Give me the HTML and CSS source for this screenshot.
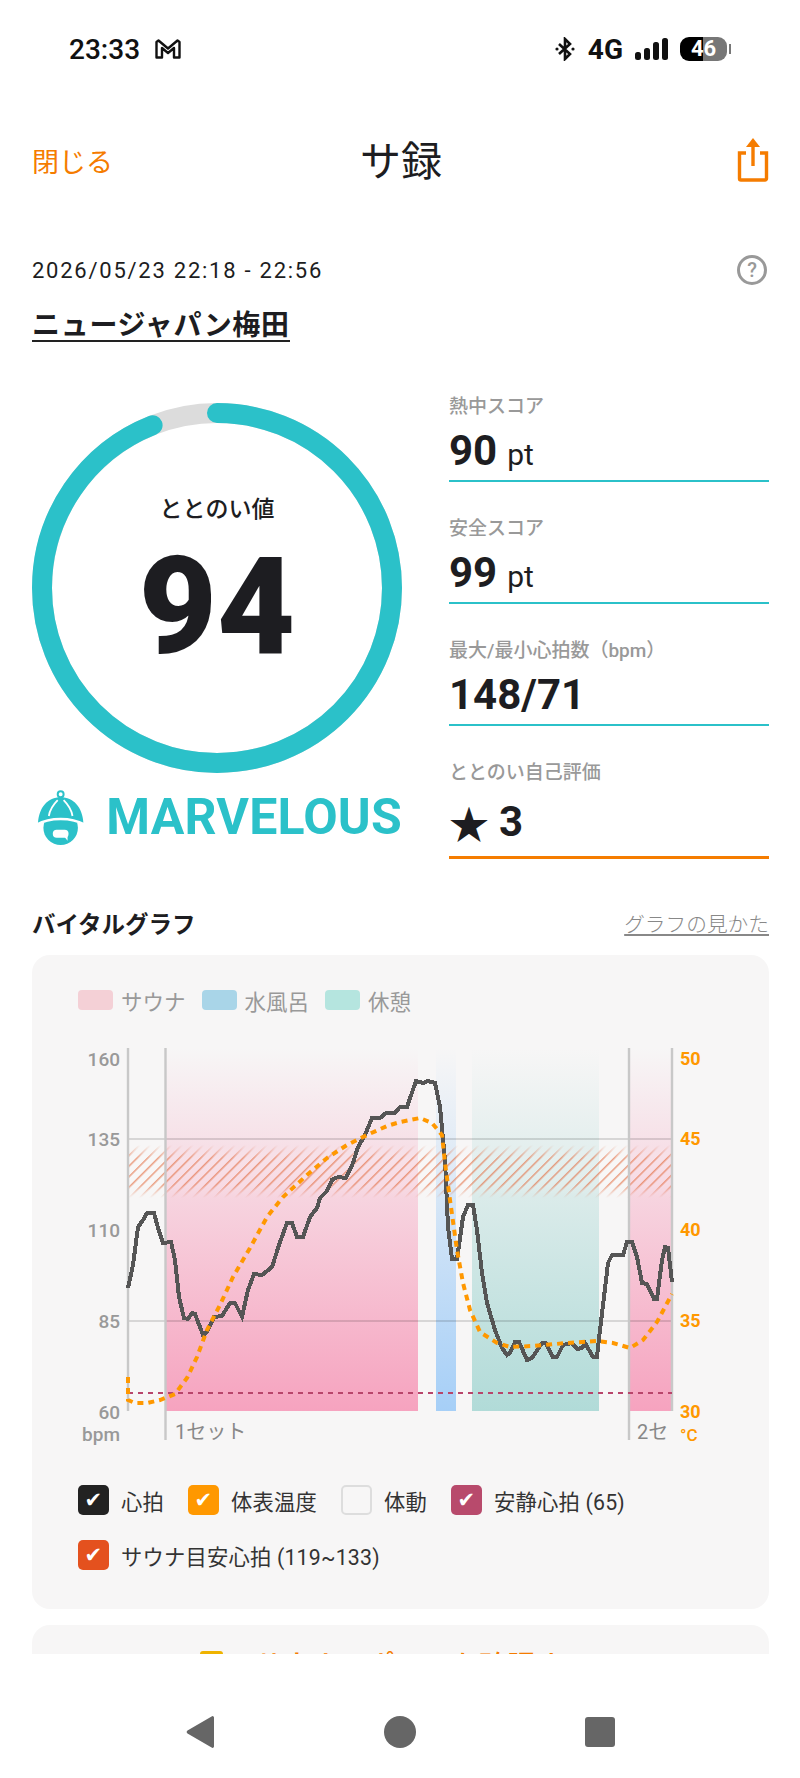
FILE: index.html
```html
<!DOCTYPE html>
<html lang="ja">
  <head>
    <meta charset="utf-8">
    <title>サ録</title>
    <link rel="stylesheet" href="styles.css">
  </head>
  <body>
    <div class="content">
      <div class="status">
        <div class="status-left">
          <span class="time">23:33</span>
          <svg class="gmail" width="26" height="20" viewBox="0 0 26 20">
            <path d="M1.5 18.5V3L3.5 1.5L13 9.5L22.5 1.5L24.5 3V18.5H19V9L13 14L7 9V18.5Z" fill="none" stroke="#111" stroke-width="2.4" stroke-linejoin="round"/>
          </svg>
        </div>
        <div class="status-right">
          <svg width="20" height="24" viewBox="0 0 20 24">
            <path d="M4 7L15 17L10 22V2L15 7L4 17" fill="none" stroke="#111" stroke-width="2.6"/>
            <circle cx="2" cy="12" r="1.6" fill="#111"/>
            <circle cx="18" cy="12" r="1.6" fill="#111"/>
          </svg>
          <span class="net">4G</span>
          <svg class="signal" width="33" height="22" viewBox="0 0 33 22">
            <rect x="0" y="14" width="6" height="8" rx="2.5" fill="#111"/>
            <rect x="9" y="10" width="6" height="12" rx="2.5" fill="#111"/>
            <rect x="18" y="4" width="6" height="18" rx="2.5" fill="#111"/>
            <rect x="27" y="0" width="6" height="22" rx="2.5" fill="#111"/>
          </svg>
          <div class="battery"><span>46</span></div>
          <div class="battery-tip"></div>
        </div>
      </div>

      <header class="top">
        <span class="close">閉じる</span>
        <h1 class="title">サ録</h1>
        <svg class="share" width="32" height="44" viewBox="0 0 32 44">
          <path d="M9 15H2.5V40.5A1.5 1.5 0 0 0 4 42H28A1.5 1.5 0 0 0 29.5 40.5V15H23" fill="none" stroke="#f57c00" stroke-width="3.4"/>
          <path d="M16 28V4" fill="none" stroke="#f57c00" stroke-width="3.4"/>
          <path d="M16 0L23 9H9Z" fill="#f57c00"/>
        </svg>
      </header>

      <div class="date-row">
        <span class="date">2026/05/23 22:18 - 22:56</span>
        <span class="help">?</span>
      </div>
      <div class="venue">ニュージャパン梅田</div>

      <section class="scores">
        <div class="score-left">
          <div class="ring">
            <svg width="370" height="370" viewBox="0 0 370 370">
              <circle cx="185" cy="185" r="175" fill="none" stroke="#dcdcdc" stroke-width="20"/>
              <circle cx="185" cy="185" r="175" fill="none" stroke="#2bc1c9" stroke-width="20" stroke-linecap="round" pathLength="100" stroke-dasharray="94 6" transform="rotate(-90 185 185)"/>
            </svg>
            <div class="ring-text">
              <div class="ring-label">ととのい値</div>
              <div class="ring-value">94</div>
            </div>
          </div>
          <div class="rank">
            <svg width="50" height="57" viewBox="0 0 50 57">
              <circle cx="25" cy="5" r="3" fill="none" stroke="#2bc1c9" stroke-width="2"/>
              <path d="M2 34C3 18 12 8 25 8C38 8 47 18 48 34Z" fill="#2bc1c9"/>
              <circle cx="25" cy="39" r="17.5" fill="#2bc1c9"/>
              <path d="M13 27C14 21 18 15 22 11M37 27C36 21 32 15 28 11" fill="none" stroke="#fff" stroke-width="1.8"/>
              <path d="M0 36C14 28 36 28 50 36" fill="none" stroke="#fff" stroke-width="2.4"/>
              <rect x="17" y="41" width="16" height="8" rx="4" fill="#fff"/>
              <path d="M28 47L32 52L32 45Z" fill="#fff"/>
            </svg>
            <span class="rank-name">MARVELOUS</span>
          </div>
        </div>

        <div class="stats">
          <div class="stat">
            <div class="stat-label">熱中スコア</div>
            <div class="stat-value">90<span class="unit">pt</span></div>
          </div>
          <div class="stat">
            <div class="stat-label">安全スコア</div>
            <div class="stat-value">99<span class="unit">pt</span></div>
          </div>
          <div class="stat">
            <div class="stat-label">最大/最小心拍数（bpm）</div>
            <div class="stat-value">148/71</div>
          </div>
          <div class="stat stat-self">
            <div class="stat-label">ととのい自己評価</div>
            <div class="stat-value"><span class="star">★</span>3</div>
          </div>
        </div>
      </section>

      <div class="section-head">
        <h2 class="section-title">バイタルグラフ</h2>
        <span class="section-link">グラフの見かた</span>
      </div>

      <section class="card graph-card">
        <div class="legend">
          <span class="swatch sw-sauna"></span><span class="legend-text">サウナ</span>
          <span class="swatch sw-water"></span><span class="legend-text">水風呂</span>
          <span class="swatch sw-rest"></span><span class="legend-text">休憩</span>
        </div>

        <svg class="chart" width="737" height="420" viewBox="32 1030 737 420">
          <defs>
            <linearGradient id="gSauna" x1="0" y1="0" x2="0" y2="1">
              <stop offset="0" stop-color="#f6a3bf" stop-opacity="0"/>
              <stop offset="1" stop-color="#f6a3bf"/>
            </linearGradient>
            <linearGradient id="gWater" x1="0" y1="0" x2="0" y2="1">
              <stop offset="0" stop-color="#a6cff7" stop-opacity="0"/>
              <stop offset="1" stop-color="#a6cff7"/>
            </linearGradient>
            <linearGradient id="gRest" x1="0" y1="0" x2="0" y2="1">
              <stop offset="0" stop-color="#b1dbd8" stop-opacity="0"/>
              <stop offset="1" stop-color="#b1dbd8"/>
            </linearGradient>
            <pattern id="hatch" width="7.5" height="7.5" patternUnits="userSpaceOnUse" patternTransform="rotate(45)">
              <rect x="0" y="0" width="1.5" height="7.5" fill="#e2693c" fill-opacity=".62"/>
            </pattern>
            <linearGradient id="gFade" x1="0" y1="0" x2="0" y2="1">
              <stop offset="0" stop-color="#fff" stop-opacity="0"/>
              <stop offset=".25" stop-color="#fff"/>
              <stop offset=".75" stop-color="#fff"/>
              <stop offset="1" stop-color="#fff" stop-opacity="0"/>
            </linearGradient>
            <mask id="fadeMask" maskUnits="userSpaceOnUse" x="128" y="1145" width="544" height="53">
              <rect x="128" y="1145" width="544" height="53" fill="url(#gFade)"/>
            </mask>
          </defs>

          <rect x="166" y="1048" width="252" height="363" fill="url(#gSauna)"/>
          <rect x="436" y="1048" width="20" height="363" fill="url(#gWater)"/>
          <rect x="472" y="1048" width="127" height="363" fill="url(#gRest)"/>
          <rect x="630" y="1048" width="42" height="363" fill="url(#gSauna)"/>

          <line class="grid" x1="128" y1="1139" x2="672" y2="1139"/>
          <line class="grid" x1="128" y1="1321" x2="672" y2="1321"/>

          <g mask="url(#fadeMask)">
            <rect x="128" y="1145" width="544" height="53" fill="#fff" fill-opacity=".12"/>
            <rect x="128" y="1145" width="544" height="53" fill="url(#hatch)"/>
          </g>

          <line class="axis" x1="128" y1="1048" x2="128" y2="1411"/>
          <line class="axis" x1="165.5" y1="1048" x2="165.5" y2="1440"/>
          <line class="axis" x1="629" y1="1048" x2="629" y2="1440"/>
          <line class="axis" x1="672" y1="1048" x2="672" y2="1411"/>

          <line x1="128" y1="1393" x2="672" y2="1393" stroke="#b8456b" stroke-width="2" stroke-dasharray="5 5"/>

          <polyline class="hr" points="128,1288 133,1265 138,1227 143,1220 147,1213 154,1213 158,1228 163,1243 171,1242 175,1260 179,1297 184,1318 188,1319 192,1313 195,1314 203,1335 207,1332 214,1317 222,1316 230,1303 235,1303 242,1317 248,1290 254,1274 262,1275 272,1267 280,1242 287,1223 292,1223 297,1237 303,1237 310,1217 317,1208 320,1198 327,1191 332,1180 338,1177 346,1178 353,1163 358,1147 365,1135 372,1118 380,1118 386,1113 395,1113 400,1107 407,1107 416,1081 423,1083 428,1081 435,1083 440,1107 445,1160 448,1227 452,1259 457,1259 463,1217 468,1205 473,1205 477,1230 482,1273 487,1303 495,1330 502,1348 507,1355 510,1353 515,1342 519,1342 527,1360 532,1358 542,1343 546,1343 553,1357 557,1357 563,1345 572,1343 577,1349 582,1348 585,1343 593,1357 597,1357 600,1330 604,1297 608,1263 612,1255 623,1255 627,1242 632,1242 637,1257 642,1283 647,1284 654,1299 657,1299 662,1260 665,1247 668,1248 672,1282"/>
          <polyline class="temp" points="128,1377 128,1400 135,1403 147,1403 160,1400 175,1394 187,1378 197,1357 207,1330 220,1305 233,1277 250,1248 267,1217 283,1197 307,1175 327,1158 347,1145 367,1135 387,1126 400,1122 420,1118 432,1123 442,1135 445,1163 450,1200 457,1250 463,1283 470,1310 480,1332 497,1343 510,1347 533,1346 567,1343 597,1341 613,1343 630,1348 643,1340 657,1322 672,1294"/>

          <text class="tick" x="120" y="1066" text-anchor="end">160</text>
          <text class="tick" x="120" y="1146" text-anchor="end">135</text>
          <text class="tick" x="120" y="1237" text-anchor="end">110</text>
          <text class="tick" x="120" y="1328" text-anchor="end">85</text>
          <text class="tick" x="120" y="1419" text-anchor="end">60</text>
          <text class="tick" x="120" y="1441" text-anchor="end">bpm</text>

          <text class="tick-r" x="680" y="1065">50</text>
          <text class="tick-r" x="680" y="1145">45</text>
          <text class="tick-r" x="680" y="1236">40</text>
          <text class="tick-r" x="680" y="1327">35</text>
          <text class="tick-r" x="680" y="1418">30</text>
          <text class="tick-c" x="680" y="1441">°C</text>

          <text class="set" x="175" y="1439">1セット</text>
          <text class="set" x="637" y="1439">2セ</text>
        </svg>

        <div class="checks">
          <label class="check"><span class="box box-hr">✔</span>心拍</label>
          <label class="check"><span class="box box-temp">✔</span>体表温度</label>
          <label class="check"><span class="box box-move"></span>体動</label>
          <label class="check"><span class="box box-rest">✔</span>安静心拍 (65)</label>
          <label class="check"><span class="box box-target">✔</span>サウナ目安心拍 (119~133)</label>
        </div>
      </section>

      <section class="card next-card">
        <span class="next-icon"></span>
        <span class="next-text">サウナレポートを確認する</span>
      </section>
    </div>

    <nav class="nav">
      <svg width="29" height="34" viewBox="0 0 29 34">
        <path d="M28 2.5V31.5A1.5 1.5 0 0 1 25.6 32.6L1.5 18.5A2 2 0 0 1 1.5 15.5L25.6 1.4A1.5 1.5 0 0 1 28 2.5Z" fill="#666"/>
      </svg>
      <svg width="32" height="32" viewBox="0 0 32 32"><circle cx="16" cy="16" r="16" fill="#666"/></svg>
      <svg width="30" height="30" viewBox="0 0 30 30"><rect width="30" height="30" rx="3" fill="#666"/></svg>
    </nav>
  </body>
</html>
```

FILE: styles.css
```css
* {
  box-sizing: border-box;
}
body {
  margin: 0;
  width: 800px;
  height: 1778px;
  display: flex;
  flex-direction: column;
  background: #fff;
  color: #1d1d21;
  font-family: Roboto, "Noto Sans CJK JP", sans-serif;
  overflow: hidden;
}
.content {
  height: 1654px;
  overflow: hidden;
  padding: 0 31px 0 32px;
}

/* status bar */
.status {
  height: 98px;
  margin: 0 -31px 0 -32px;
  padding: 0 69px;
  display: flex;
  justify-content: space-between;
  align-items: center;
  color: #111;
}
.status-left,
.status-right {
  display: flex;
  align-items: center;
}
.time {
  font-size: 28px;
  font-weight: 500;
}
.gmail {
  margin-left: 15px;
}
.net {
  margin-left: 13px;
  font-size: 28px;
  font-weight: 700;
}
.signal {
  margin-left: 12px;
}
.battery {
  width: 47px;
  height: 24px;
  margin-left: 12px;
  border-radius: 9px;
  background: linear-gradient(90deg, #000 49%, #777 49%);
  color: #fff;
  font-size: 22px;
  font-weight: 700;
  line-height: 24px;
  text-align: center;
}
.battery-tip {
  width: 2px;
  height: 10px;
  margin-left: 2px;
  background: #777;
}

/* title row */
.top {
  height: 128px;
  display: flex;
  justify-content: space-between;
  align-items: center;
  position: relative;
}
.close {
  margin-top: -3px;
  font-size: 27px;
  color: #f57c00;
}
.title {
  position: absolute;
  left: 328px;
  top: 36px;
  margin: 0;
  font-size: 41px;
  font-weight: 400;
  line-height: 56px;
}
.share {
  margin-top: -4px;
}

.date-row {
  height: 44px;
  margin-top: 22px;
  display: flex;
  justify-content: space-between;
  align-items: center;
}
.date {
  font-size: 22px;
  letter-spacing: 1.75px;
}
.help {
  width: 30px;
  height: 30px;
  margin-right: 2px;
  border: 3px solid #999;
  border-radius: 50%;
  color: #999;
  font-size: 20px;
  font-weight: 500;
  line-height: 24px;
  text-align: center;
}
.venue {
  display: inline-block;
  margin-top: 20px;
  font-size: 28px;
  font-weight: 700;
  letter-spacing: 0.7px;
  line-height: 28px;
  border-bottom: 2px solid #222;
}

/* ring + stats */
.scores {
  display: flex;
  margin-top: 50px;
}
.score-left {
  width: 370px;
  padding-top: 11px;
}
.ring {
  position: relative;
  width: 370px;
  height: 370px;
}
.ring svg {
  display: block;
}
.ring-text {
  position: absolute;
  left: 0;
  right: 0;
  top: 90px;
  text-align: center;
}
.ring-label {
  font-size: 23px;
  font-weight: 500;
  line-height: 34px;
}
.ring-value {
  margin-top: 16px;
  font-size: 135px;
  font-weight: 900;
  line-height: 128px;
}
.rank {
  display: flex;
  align-items: center;
  margin-top: 16px;
  padding-left: 4px;
}
.rank-name {
  margin-left: 21px;
  font-size: 50px;
  font-weight: 700;
  letter-spacing: .2px;
  line-height: 57px;
  color: #2bc1c9;
}
.stats {
  width: 320px;
  margin-left: 47px;
}
.stat {
  height: 90px;
  margin-bottom: 32px;
  border-bottom: 2px solid #2bc1c9;
}
.stat-label {
  font-size: 19px;
  font-weight: 500;
  line-height: 30px;
  color: #999;
}
.stat-value {
  font-size: 42px;
  font-weight: 700;
  line-height: 58px;
}
.unit {
  margin-left: 10px;
  font-size: 30px;
  font-weight: 400;
}
.stat-self {
  height: 101px;
  margin-bottom: 0;
  border-bottom: 3px solid #f57c00;
}
.stat-self .stat-value {
  display: flex;
  align-items: center;
  height: 68px;
}
.star {
  margin-right: 10px;
  font-family: "Noto Sans CJK JP", sans-serif;
  font-size: 40px;
  font-weight: 400;
}

/* graph */
.section-head {
  height: 40px;
  margin-top: 44px;
  display: flex;
  justify-content: space-between;
  align-items: center;
}
.section-title {
  margin: 0;
  font-size: 23.5px;
  font-weight: 700;
}
.section-link {
  font-size: 20.7px;
  font-weight: 300;
  color: #888;
  text-decoration: underline;
}
.card {
  background: #f7f6f6;
  border-radius: 18px;
}
.graph-card {
  height: 654px;
  margin-top: 12px;
  padding-top: 35px;
}
.legend {
  display: flex;
  align-items: center;
  height: 20px;
  padding-left: 46px;
}
.swatch {
  width: 35px;
  height: 20px;
  margin-right: 8px;
  border-radius: 4px;
}
.sw-sauna {
  background: #f4d0d6;
}
.sw-water {
  background: #a9d5e8;
}
.sw-rest {
  background: #b5e5df;
}
.legend-text {
  margin-right: 16px;
  font-size: 21.5px;
  color: #999;
}
.chart {
  display: block;
  margin-top: 20px;
}
.grid {
  stroke: #000;
  stroke-opacity: .13;
  stroke-width: 2;
}
.axis {
  stroke: #c8c8c8;
  stroke-width: 2.4;
}
.hr {
  fill: none;
  stroke: #555;
  stroke-width: 4;
  shape-rendering: crispEdges;
}
.temp {
  fill: none;
  stroke: #ff9800;
  stroke-width: 4;
  stroke-dasharray: 6 5;
}
.tick {
  font-size: 19px;
  font-weight: 500;
  fill: #999;
}
.tick-r {
  font-size: 18px;
  font-weight: 700;
  fill: #ff9800;
}
.tick-c {
  font-size: 17px;
  font-weight: 500;
  fill: #ff9800;
}
.set {
  font-size: 20px;
  fill: #888;
}
.checks {
  display: flex;
  flex-wrap: wrap;
  gap: 25px 24px;
  padding: 35px 46px 0;
}
.check {
  display: flex;
  align-items: center;
  height: 30px;
  font-size: 21.3px;
  letter-spacing: .2px;
  color: #333;
}
.box {
  width: 31px;
  height: 30px;
  margin-right: 12px;
  border-radius: 5px;
  color: #fff;
  font-family: "DejaVu Sans", sans-serif;
  font-size: 21px;
  line-height: 30px;
  text-align: center;
}
.box-hr {
  background: #222;
}
.box-temp {
  background: #ff9800;
}
.box-move {
  border: 2px solid #ddd;
}
.box-rest {
  background: #b84a6c;
}
.box-target {
  background: #e4511e;
}
.next-card {
  display: flex;
  align-items: flex-start;
  height: 120px;
  margin-top: 16px;
  padding: 26px 0 0 168px;
}
.next-icon {
  width: 23px;
  height: 24px;
  margin-right: 32px;
  border-radius: 3px;
  background: #efb300;
}
.next-text {
  margin-top: 2px;
  font-size: 28px;
  font-weight: 500;
  line-height: 28px;
  color: #f57c00;
}

/* android nav */
.nav {
  flex: 1;
  display: flex;
  justify-content: center;
  gap: 169px;
  align-items: center;
  padding: 32px 0 0;
  background: #fff;
}
```
